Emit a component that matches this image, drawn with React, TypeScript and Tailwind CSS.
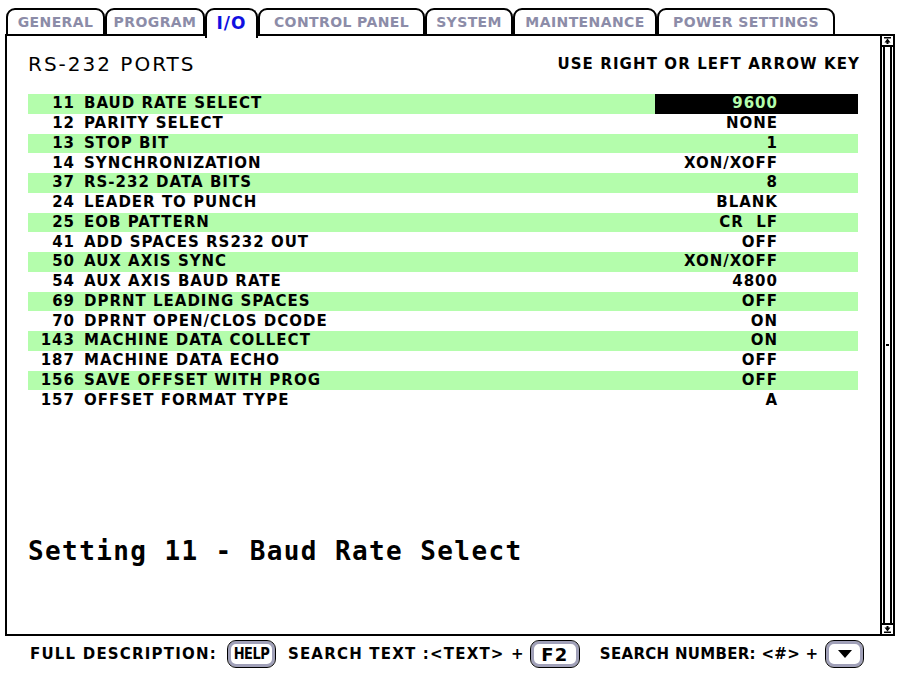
import React from "react";

interface Setting {
  num: number;
  label: string;
  value: string;
}

const settings: Setting[] = [
  { num: 11, label: "BAUD RATE SELECT", value: "9600" },
  { num: 12, label: "PARITY SELECT", value: "NONE" },
  { num: 13, label: "STOP BIT", value: "1" },
  { num: 14, label: "SYNCHRONIZATION", value: "XON/XOFF" },
  { num: 37, label: "RS-232 DATA BITS", value: "8" },
  { num: 24, label: "LEADER TO PUNCH", value: "BLANK" },
  { num: 25, label: "EOB PATTERN", value: "CR  LF" },
  { num: 41, label: "ADD SPACES RS232 OUT", value: "OFF" },
  { num: 50, label: "AUX AXIS SYNC", value: "XON/XOFF" },
  { num: 54, label: "AUX AXIS BAUD RATE", value: "4800" },
  { num: 69, label: "DPRNT LEADING SPACES", value: "OFF" },
  { num: 70, label: "DPRNT OPEN/CLOS DCODE", value: "ON" },
  { num: 143, label: "MACHINE DATA COLLECT", value: "ON" },
  { num: 187, label: "MACHINE DATA ECHO", value: "OFF" },
  { num: 156, label: "SAVE OFFSET WITH PROG", value: "OFF" },
  { num: 157, label: "OFFSET FORMAT TYPE", value: "A" },
];

const tabs = [
  { name: "GENERAL", w: "w-[99px]" },
  { name: "PROGRAM", w: "w-[100px]" },
  { name: "I/O", w: "w-[53px]" },
  { name: "CONTROL PANEL", w: "w-[167px]" },
  { name: "SYSTEM", w: "w-[88px]" },
  { name: "MAINTENANCE", w: "w-[144px]" },
  { name: "POWER SETTINGS", w: "w-[178px]" },
];

function KeyCap({ children, w }: { children: React.ReactNode; w: string }) {
  return (
    <span
      className={`inline-flex items-center justify-center h-[26px] ${w} rounded-[8px] border-[3px] border-[#a0a0b8] outline-[1.5px] outline-black bg-white`}
    >
      {children}
    </span>
  );
}

export default function App() {
  return (
    <div
      className="w-[900px] h-[677px] bg-white text-black overflow-hidden"
      style={{ fontFamily: '"DejaVu Sans", "Liberation Sans", sans-serif' }}
    >
      {/* tab strip */}
      <div className="flex pl-[6px] pt-[8px] h-[36px] relative z-10">
        {tabs.map((t) => {
          const active = t.name === "I/O";
          return (
            <div
              key={t.name}
              className={`${t.w} h-[28px] border-2 border-black rounded-t-[9px] flex items-center justify-center font-bold ${
                active
                  ? "border-b-0 bg-white text-[#1010e0] h-[30px] text-[17px] tracking-[1px]"
                  : "text-[#8c8ca8] bg-white text-[14px] tracking-[0.4px]"
              }`}
            >
              {t.name}
            </div>
          );
        })}
      </div>

      {/* main panel */}
      <div className="ml-[5px] w-[890px] h-[602px] -mt-[2px] border-2 border-black flex">
        <div className="flex-1 flex flex-col">
          <div className="flex items-center justify-between pl-[21px] pr-[20px] pt-[14px] h-[42px]">
            <span className="text-[20px] tracking-[2px]">RS-232 PORTS</span>
            <span className="text-[15px] font-bold tracking-[1.1px]">
              USE RIGHT OR LEFT ARROW KEY
            </span>
          </div>

          <div className="mt-[16px] ml-[21px] mr-[22px] flex flex-col">
            {settings.map((s, i) => {
              const green = i % 2 === 0;
              const selected = i === 0;
              return (
                <div
                  key={s.num}
                  className={`flex items-center h-[19.75px] text-[15px] font-bold tracking-[1px] leading-none ${
                    green ? "bg-[#b4fdac]" : "bg-white"
                  }`}
                >
                  <span className="w-[47px] text-right">{s.num}</span>
                  <span className="ml-[9px] flex-1">{s.label}</span>
                  <span
                    className={`w-[203px] h-full flex items-center justify-end pr-[80px] whitespace-pre ${
                      selected ? "bg-black text-[#b4fdac]" : ""
                    }`}
                  >
                    {s.value}
                  </span>
                </div>
              );
            })}
          </div>

          <div
            className="mt-[122px] pl-[21px] text-[26px] font-bold tracking-[1.4px]"
            style={{ fontFamily: '"DejaVu Sans Mono", "Liberation Mono", monospace' }}
          >
            Setting 11 - Baud Rate Select
          </div>
        </div>

        {/* scrollbar */}
        <div className="w-[13px] border-l-2 border-black flex flex-col">
          <div className="h-[11px] border-b-2 border-black flex items-center justify-center">
            <svg width="7" height="7" viewBox="0 0 7 7">
              <rect x="0" y="0" width="7" height="1.5" fill="black" />
              <path d="M3.5 1.5 L6.5 5.5 L0.5 5.5 Z" fill="black" />
              <rect x="2.5" y="5" width="2" height="2" fill="black" />
            </svg>
          </div>
          <div className="flex-1 flex justify-center px-[1px]">
            <div className="w-full border-x-2 border-black flex flex-col">
              <div className="h-[299px] border-b-2 border-black mx-[1px]" />
            </div>
          </div>
          <div className="h-[11px] border-t-2 border-black flex items-center justify-center">
            <svg width="7" height="7" viewBox="0 0 7 7">
              <rect x="2.5" y="0" width="2" height="2" fill="black" />
              <path d="M0.5 1.5 L6.5 1.5 L3.5 5.5 Z" fill="black" />
              <rect x="0" y="5.5" width="7" height="1.5" fill="black" />
            </svg>
          </div>
        </div>
      </div>

      {/* footer */}
      <div className="flex items-center h-[36px] pl-[30px] text-[15px] font-bold tracking-[1.2px]">
        <span>FULL DESCRIPTION:</span>
        <span className="ml-[11px]">
          <KeyCap w="w-[47px]">
            <span className="text-[13px] tracking-[-0.5px] scale-y-125">HELP</span>
          </KeyCap>
        </span>
        <span className="ml-[13px]">SEARCH TEXT :&lt;TEXT&gt; +</span>
        <span className="ml-[6px]">
          <KeyCap w="w-[48px]">
            <span className="text-[18px]">F2</span>
          </KeyCap>
        </span>
        <span className="ml-[21px] tracking-[0.3px]">SEARCH NUMBER: &lt;#&gt; +</span>
        <span className="ml-[8px]">
          <KeyCap w="w-[37px]">
            <svg width="16" height="10" viewBox="0 0 16 10">
              <path d="M1 1 L15 1 L8 9 Z" fill="black" />
            </svg>
          </KeyCap>
        </span>
      </div>
    </div>
  );
}
